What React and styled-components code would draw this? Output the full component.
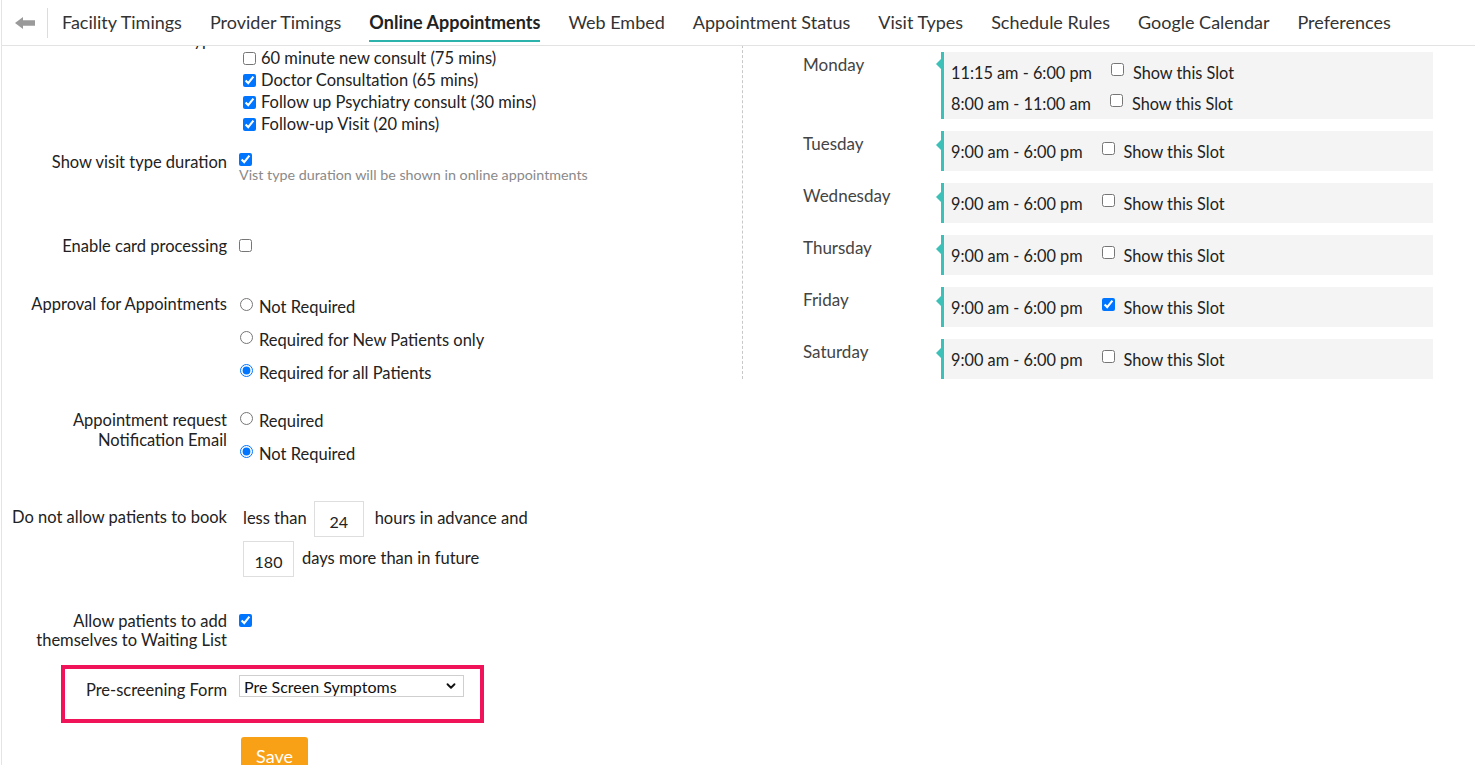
import React from "react";
import styled, { createGlobalStyle, css } from "styled-components";
import { ChevronDown } from "lucide-react";

const GlobalStyle = createGlobalStyle`
  body {
    margin: 0;
    font-family: Lato, "Open Sans", sans-serif;
    color: #222;
    background: #fff;
    overflow: hidden;
  }
`;

const Page = styled.div`
  margin-left: 1px;
  border-left: 1px solid #e4e4e4;
  height: 100vh;
  display: flex;
  flex-direction: column;
`;

const TopBar = styled.div`
  flex: none;
  display: flex;
  align-items: center;
  height: 45px;
  background: #fff;
  border-bottom: 1px solid #e3e3e3;
`;

const BackButton = styled.div`
  display: flex;
  align-items: center;
  justify-content: center;
  width: 45px;
  height: 30px;
  border-right: 1px solid #dcdcdc;
`;

const Tab = styled.div`
  height: 45px;
  box-sizing: border-box;
  padding: 11px 14px 0;
  font-size: 18px;
  color: #333;
  white-space: nowrap;
`;

const TabLabel = styled.span`
  display: inline-block;
  line-height: 20px;
  padding-bottom: 8px;
  border-bottom: 2px solid transparent;
  ${(p) =>
    p.$active &&
    css`
      font-weight: 700;
      color: #222;
      border-bottom-color: #2bb3ac;
    `}
`;

/* the settings page is scrolled a little: the viewport clips its top */
const Viewport = styled.div`
  flex: 1;
  overflow: hidden;
`;

const Body = styled.div`
  display: flex;
  align-items: flex-start;
  margin-top: -21px;
`;

const LeftColumn = styled.div`
  width: 740px;
`;

const FormRow = styled.div`
  display: grid;
  grid-template-columns: ${(p) => p.$labelWidth || 225}px 1fr;
  column-gap: 12px;
  align-items: start;
  margin-top: ${(p) => p.$mt || 0}px;
`;

const FieldLabel = styled.div`
  text-align: right;
  font-size: 16.5px;
  line-height: ${(p) => p.$lh || 20}px;
  padding-top: ${(p) => p.$pt ?? 3}px;
  color: #222;
  white-space: nowrap;
`;

const OptionList = styled.div`
  display: flex;
  flex-direction: column;
  padding-top: 22px;
`;

const CheckItem = styled.label`
  display: flex;
  align-items: center;
  height: 22px;
  font-size: 16.5px;
  white-space: nowrap;
  input {
    margin: 0 5px 0 4px;
  }
`;

const Checkbox = styled.input.attrs({ type: "checkbox" })`
  display: block;
  width: 13px;
  height: 13px;
  margin: ${(p) => p.$m || "0"};
`;

const Hint = styled.div`
  font-size: 14.3px;
  line-height: 16px;
  color: #8a8a8a;
  white-space: nowrap;
`;

const RadioList = styled.div`
  display: flex;
  flex-direction: column;
  gap: 13px;
  padding-top: ${(p) => p.$pt || 4}px;
`;

const RadioItem = styled.label`
  display: flex;
  align-items: center;
  height: 20px;
  font-size: 16.5px;
  white-space: nowrap;
  input {
    margin: 0 6px 2px 1px;
    width: 13px;
    height: 13px;
  }
  span {
    padding-top: 3px;
  }
`;

const BookLines = styled.div`
  display: flex;
  flex-direction: column;
  gap: 4px;
`;

const BookLine = styled.div`
  display: flex;
  align-items: center;
  height: 36px;
  font-size: 16.5px;
  white-space: nowrap;
`;

const InlineText = styled.span`
  margin-left: ${(p) => p.$ml || 0}px;
  margin-bottom: 3px;
`;

const NumberBox = styled.div`
  display: flex;
  align-items: center;
  justify-content: center;
  width: ${(p) => p.$w}px;
  height: 36px;
  box-sizing: border-box;
  margin-left: ${(p) => p.$ml || 0}px;
  border: 1px solid #dedede;
  font-size: 16px;
  padding-top: 4px;
  color: #222;
`;

const Highlight = styled.div`
  margin: 15px 0 0 59px;
  width: 423px;
  box-sizing: border-box;
  border: 4px solid #f0135a;
  padding: 6px 0 19px;
`;

const SelectWrap = styled.div`
  position: relative;
  width: 225px;
  height: 22px;
`;

const Select = styled.select`
  appearance: none;
  width: 100%;
  height: 22px;
  box-sizing: border-box;
  border: 1px solid #cfcfcf;
  border-radius: 0;
  background: #fff;
  font-family: Lato, sans-serif;
  font-size: 16px;
  color: #111;
  padding: 0 0 0 4px;
`;

const SelectArrow = styled.span`
  position: absolute;
  right: 6px;
  top: 4px;
  pointer-events: none;
  display: flex;
`;

const SaveButton = styled.button`
  margin: 14px 0 0 239px;
  width: 67px;
  height: 34px;
  border: none;
  border-radius: 3px;
  background: #f9a116;
  color: #fff;
  font-family: Lato, sans-serif;
  font-size: 18px;
  padding-top: 4px;
`;

const RightColumn = styled.div`
  border-left: 1px dashed #c8c8c8;
  padding: 27px 0 0 60px;
`;

const DayRow = styled.div`
  display: flex;
  align-items: flex-start;
  & + & {
    margin-top: 12px;
  }
`;

const DayName = styled.div`
  width: 138px;
  font-size: 17px;
  line-height: 20px;
  padding-top: 3px;
  color: #444;
`;

const SlotBox = styled.div`
  position: relative;
  width: 492px;
  box-sizing: border-box;
  background: #f4f4f4;
  border-left: 3px solid #3cc0b8;
  padding: 11px 7px ${(p) => (p.$multi ? 5 : 9)}px;
  display: flex;
  flex-direction: column;
  gap: 11px;
  &::before {
    content: "";
    position: absolute;
    left: -8px;
    top: ${(p) => (p.$multi ? 7 : 9)}px;
    border-top: 5px solid transparent;
    border-bottom: 5px solid transparent;
    border-right: 5px solid #3cc0b8;
  }
`;

const SlotLine = styled.div`
  display: flex;
  align-items: flex-start;
  height: 20px;
  font-size: 16.3px;
  line-height: 20px;
  color: #222;
  white-space: nowrap;
  input {
    margin: 0 9px 0 19px;
  }
`;

const visitTypes = [
  { name: "60 minute new consult (75 mins)", checked: false },
  { name: "Doctor Consultation (65 mins)", checked: true },
  { name: "Follow up Psychiatry consult (30 mins)", checked: true },
  { name: "Follow-up Visit (20 mins)", checked: true },
];

const tabs = [
  "Facility Timings",
  "Provider Timings",
  "Online Appointments",
  "Web Embed",
  "Appointment Status",
  "Visit Types",
  "Schedule Rules",
  "Google Calendar",
  "Preferences",
];

const days = [
  {
    day: "Monday",
    slots: [
      { time: "11:15 am - 6:00 pm", on: false },
      { time: "8:00 am - 11:00 am", on: false },
    ],
  },
  { day: "Tuesday", slots: [{ time: "9:00 am - 6:00 pm", on: false }] },
  { day: "Wednesday", slots: [{ time: "9:00 am - 6:00 pm", on: false }] },
  { day: "Thursday", slots: [{ time: "9:00 am - 6:00 pm", on: false }] },
  { day: "Friday", slots: [{ time: "9:00 am - 6:00 pm", on: true }] },
  { day: "Saturday", slots: [{ time: "9:00 am - 6:00 pm", on: false }] },
];

function BackArrow() {
  return (
    <svg width="20" height="12" viewBox="0 0 20 12">
      <polygon points="0,6 8,0 8,3.3 20,3.3 20,8.7 8,8.7 8,12" fill="#9a9a9a" />
    </svg>
  );
}

export default function App() {
  return (
    <Page>
      <GlobalStyle />
      <TopBar>
        <BackButton>
          <BackArrow />
        </BackButton>
        {tabs.map((t) => (
          <Tab key={t}>
            <TabLabel $active={t === "Online Appointments"}>{t}</TabLabel>
          </Tab>
        ))}
      </TopBar>

      <Viewport>
        <Body>
          <LeftColumn>
            <FormRow>
              <FieldLabel $pt={5}>Visit Types</FieldLabel>
              <OptionList>
                {visitTypes.map((v) => (
                  <CheckItem key={v.name}>
                    <Checkbox defaultChecked={v.checked} />
                    {v.name}
                  </CheckItem>
                ))}
              </OptionList>
            </FormRow>

            <FormRow $mt={14}>
              <FieldLabel>Show visit type duration</FieldLabel>
              <div>
                <Checkbox defaultChecked $m="4px 0 1px 0" />
                <Hint>Vist type duration will be shown in online appointments</Hint>
              </div>
            </FormRow>

            <FormRow $mt={50}>
              <FieldLabel>Enable card processing</FieldLabel>
              <Checkbox $m="6px 0 0 0" />
            </FormRow>

            <FormRow $mt={35}>
              <FieldLabel>Approval for Appointments</FieldLabel>
              <RadioList>
                <RadioItem>
                  <input type="radio" name="approval" />
                  <span>Not Required</span>
                </RadioItem>
                <RadioItem>
                  <input type="radio" name="approval" />
                  <span>Required for New Patients only</span>
                </RadioItem>
                <RadioItem>
                  <input type="radio" name="approval" defaultChecked />
                  <span>Required for all Patients</span>
                </RadioItem>
              </RadioList>
            </FormRow>

            <FormRow $mt={26}>
              <FieldLabel>
                Appointment request
                <br />
                Notification Email
              </FieldLabel>
              <RadioList $pt={2}>
                <RadioItem>
                  <input type="radio" name="notify" />
                  <span>Required</span>
                </RadioItem>
                <RadioItem>
                  <input type="radio" name="notify" defaultChecked />
                  <span>Not Required</span>
                </RadioItem>
              </RadioList>
            </FormRow>

            <FormRow $mt={39}>
              <FieldLabel $pt={6}>Do not allow patients to book</FieldLabel>
              <BookLines>
                <BookLine>
                  <InlineText $ml={4}>less than</InlineText>
                  <NumberBox $w={50} $ml={7}>
                    24
                  </NumberBox>
                  <InlineText $ml={11}>hours in advance and</InlineText>
                </BookLine>
                <BookLine>
                  <NumberBox $w={51} $ml={4}>
                    180
                  </NumberBox>
                  <InlineText $ml={8}>days more than in future</InlineText>
                </BookLine>
              </BookLines>
            </FormRow>

            <FormRow $mt={35}>
              <FieldLabel $pt={0} $lh={19}>
                Allow patients to add
                <br />
                themselves to Waiting List
              </FieldLabel>
              <Checkbox defaultChecked $m="2px 0 0 0" />
            </FormRow>

            <Highlight>
              <FormRow $labelWidth={162}>
                <FieldLabel $pt={5}>Pre-screening Form</FieldLabel>
                <SelectWrap>
                  <Select defaultValue="pre">
                    <option value="pre">Pre Screen Symptoms</option>
                  </Select>
                  <SelectArrow>
                    <ChevronDown size={14} strokeWidth={3.2} color="#111" />
                  </SelectArrow>
                </SelectWrap>
              </FormRow>
            </Highlight>

            <SaveButton>Save</SaveButton>
          </LeftColumn>

          <RightColumn>
            {days.map((d) => (
              <DayRow key={d.day}>
                <DayName>{d.day}</DayName>
                <SlotBox $multi={d.slots.length > 1}>
                  {d.slots.map((s) => (
                    <SlotLine key={s.time}>
                      {s.time}
                      <Checkbox defaultChecked={s.on} />
                      Show this Slot
                    </SlotLine>
                  ))}
                </SlotBox>
              </DayRow>
            ))}
          </RightColumn>
        </Body>
      </Viewport>
    </Page>
  );
}
